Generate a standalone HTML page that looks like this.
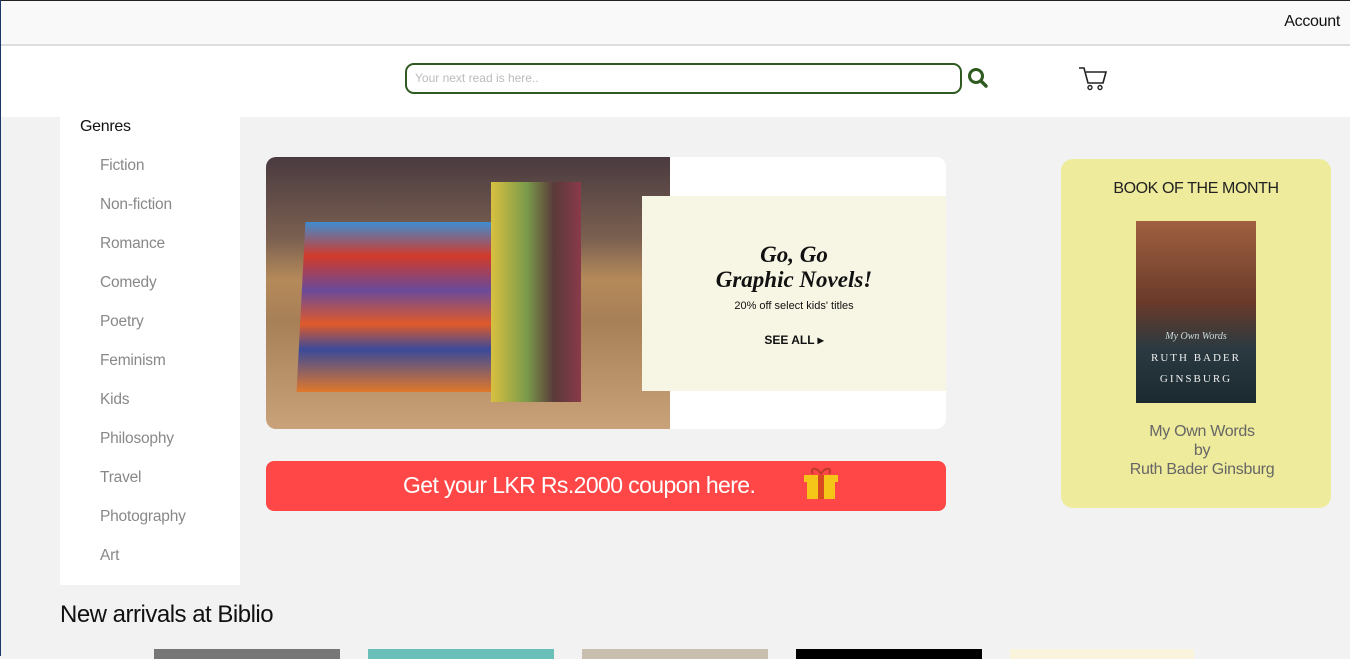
<!DOCTYPE html>
<html><head><style>
*{margin:0;padding:0;box-sizing:border-box}
body{width:1350px;height:656px;overflow:hidden;background:#f2f2f2;font-family:"Liberation Sans",sans-serif;position:relative}
.abs{position:absolute}
.top{left:0;top:0;width:1350px;height:46px;background:#f9f9f9;border-bottom:2px solid #ddd;border-top:1px solid #222}
.hdr{left:0;top:46px;width:1350px;height:71px;background:#fff}
.side{left:60px;top:117px;width:180px;height:468px;background:#fff}
.side a{position:absolute;left:40px;font-size:15.5px;letter-spacing:-0.2px;color:#888;text-decoration:none}
</style></head><body>
<div class="abs top"><span class="abs" style="right:10px;top:12px;font-size:16px;letter-spacing:-0.3px;color:#111">Account</span></div>
<div class="abs hdr">
 <div class="abs" style="left:405px;top:17px;width:557px;height:31px;border:2px solid #2f5a22;border-radius:9px"><span class="abs" style="left:8px;top:6px;font-size:12px;color:#bbb">Your next read is here..</span></div>
 <svg class="abs" style="left:967px;top:21px" width="22" height="22" viewBox="0 0 22 22"><circle cx="9" cy="9" r="6.5" fill="none" stroke="#2f5a22" stroke-width="3"/><path d="M14 14l5 5" stroke="#2f5a22" stroke-width="3.5" stroke-linecap="round"/></svg>
 <svg class="abs" style="left:1078px;top:20px" width="30" height="26" viewBox="0 0 30 26"><path d="M1 2h5l4 15h15l3-11H8" fill="none" stroke="#222" stroke-width="1.6"/><circle cx="12" cy="21.5" r="2" fill="none" stroke="#222" stroke-width="1.4"/><circle cx="22" cy="21.5" r="2" fill="none" stroke="#222" stroke-width="1.4"/></svg>
</div>
<div class="abs side">
 <span class="abs" style="left:20px;top:1px;font-size:16px;letter-spacing:-0.3px;color:#111">Genres</span>
 <a style="top:40px">Fiction</a><a style="top:79px">Non-fiction</a><a style="top:118px">Romance</a><a style="top:157px">Comedy</a><a style="top:196px">Poetry</a><a style="top:235px">Feminism</a><a style="top:274px">Kids</a><a style="top:313px">Philosophy</a><a style="top:352px">Travel</a><a style="top:391px">Photography</a><a style="top:430px">Art</a>
</div>
<div class="abs" style="left:266px;top:157px;width:680px;height:272px;background:#fff;border-radius:10px;overflow:hidden">
 <div class="abs" style="left:0;top:0;width:404px;height:272px;background:linear-gradient(#4a3a40 0,#7a6050 30%,#b58a5a 45%,#a88058 60%,#c9a27a 100%)"></div>
 <div class="abs" style="left:35px;top:65px;width:200px;height:170px;background:linear-gradient(#3f8cd0,#d23a2a 20%,#6a4a9a 40%,#e05a2a 60%,#3a4a9a 75%,#e0782a 100%);transform:skewX(-3deg)"></div>
 <div class="abs" style="left:225px;top:25px;width:90px;height:220px;background:linear-gradient(90deg,#d8c040,#7a9a4a 40%,#5a3a3a 70%,#8a3a4a)"></div>
 <div class="abs" style="left:376px;top:39px;width:304px;height:195px;background:#f7f5e4"></div>
 <div class="abs" style="left:376px;top:85px;width:304px;text-align:center;font-family:'Liberation Serif',serif;font-style:italic;font-weight:bold;font-size:23px;line-height:25px;color:#111">Go, Go<br>Graphic Novels!</div>
 <div class="abs" style="left:376px;top:143px;width:304px;text-align:center;font-size:11px;color:#111">20% off select kids' titles</div>
 <div class="abs" style="left:376px;top:176px;width:304px;text-align:center;font-size:12px;font-weight:bold;color:#111">SEE ALL ▸</div>
</div>
<div class="abs" style="left:266px;top:461px;width:680px;height:50px;background:#ff4747;border-radius:8px">
 <span class="abs" style="left:137px;top:11px;font-size:23px;letter-spacing:-0.6px;color:#fff">Get your LKR Rs.2000 coupon here.</span>
 <svg class="abs" style="left:536px;top:5px" width="38" height="34" viewBox="0 0 38 34"><path d="M19 8c-4-8-12-6-8 0M19 8c4-8 12-6 8 0" fill="none" stroke="#c0392b" stroke-width="2"/><rect x="2" y="9" width="34" height="7" fill="#f5c518"/><rect x="5" y="16" width="28" height="17" fill="#f5c518"/><rect x="16" y="9" width="6" height="24" fill="#d84a20"/></svg>
</div>
<div class="abs" style="left:1061px;top:159px;width:270px;height:349px;background:#eeeb9c;border-radius:12px">
 <div class="abs" style="left:0;top:21px;width:270px;text-align:center;font-size:16px;letter-spacing:-0.4px;color:#222">BOOK OF THE MONTH</div>
 <div class="abs" style="left:75px;top:62px;width:120px;height:182px;background:linear-gradient(#a06040,#6a3a2a 45%,#2a3a40 70%,#1a2a30)">
  <div class="abs" style="left:0;top:110px;width:120px;text-align:center;font-family:'Liberation Serif',serif;font-style:italic;font-size:10px;color:#cdd">My Own Words</div>
  <div class="abs" style="left:0;top:127px;width:120px;text-align:center;font-family:'Liberation Serif',serif;font-size:11px;letter-spacing:2px;color:#eee;line-height:21px">RUTH BADER<br>GINSBURG</div>
 </div>
 <div class="abs" style="left:6px;top:263px;width:270px;text-align:center;font-size:16px;letter-spacing:-0.3px;color:#666;line-height:19px">My Own Words<br>by<br>Ruth Bader Ginsburg</div>
</div>
<div class="abs" style="left:60px;top:601px;font-size:24px;letter-spacing:-0.5px;color:#111">New arrivals at Biblio</div>
<div class="abs" style="left:154px;top:649px;width:186px;height:10px;background:#777"></div>
<div class="abs" style="left:368px;top:649px;width:186px;height:10px;background:#6ac0b8"></div>
<div class="abs" style="left:582px;top:649px;width:186px;height:10px;background:#c8bfae"></div>
<div class="abs" style="left:796px;top:649px;width:186px;height:10px;background:#000"></div>
<div class="abs" style="left:1010px;top:649px;width:184px;height:10px;background:#fbf4dc"></div>
<div class="abs" style="left:0;top:0;width:1px;height:656px;background:#1a3a6a"></div>
</body></html>
